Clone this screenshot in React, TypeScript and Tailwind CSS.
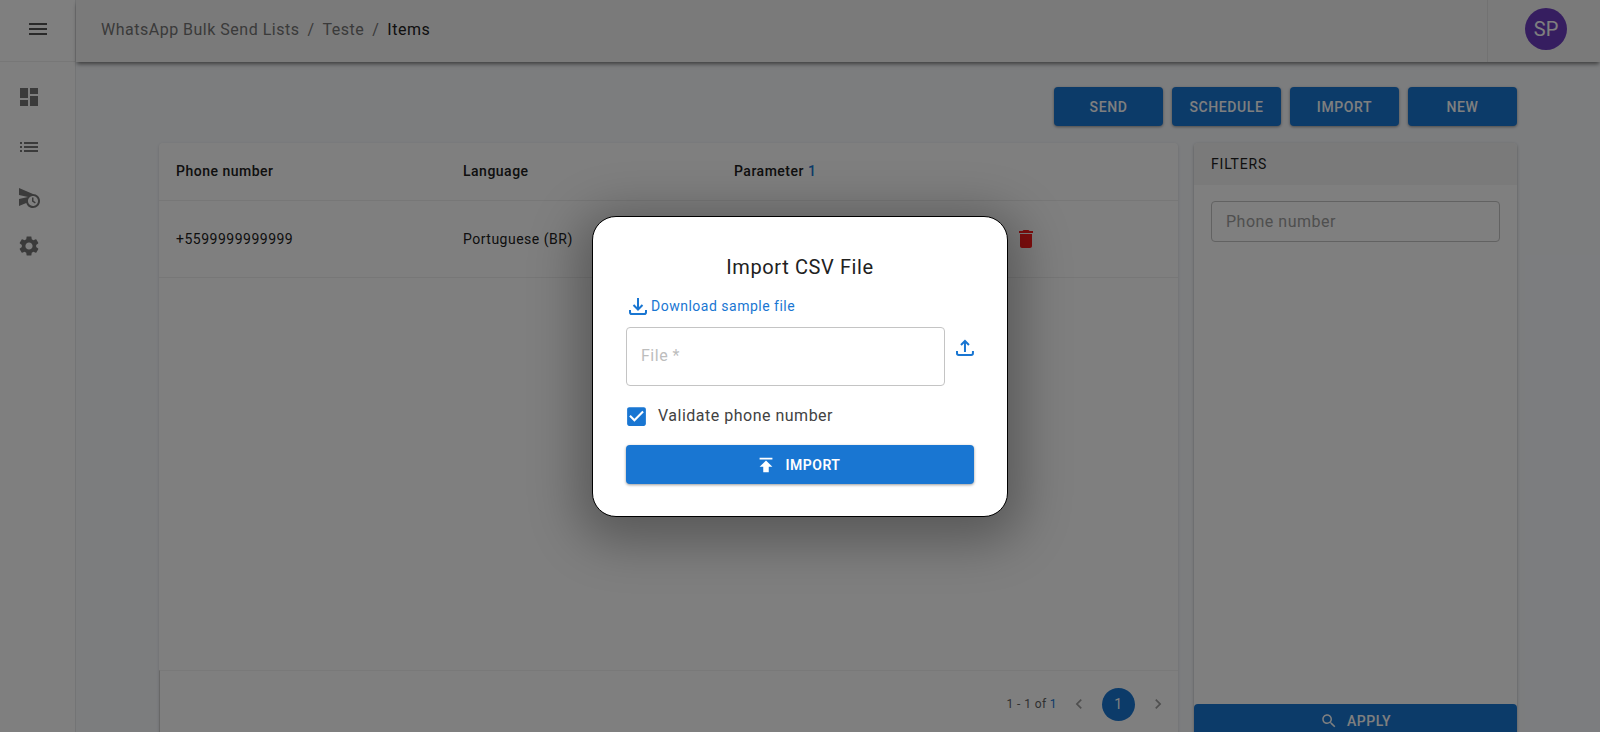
import React from 'react';

const paths = {
  menu: "M3 18h18v-2H3v2zm0-5h18v-2H3v2zm0-7v2h18V6H3z",
  dashboard: "M3 13h8V3H3v10zm0 8h8v-6H3v6zm10 0h8V11h-8v10zm0-18v6h8V3h-8z",
  list: "M3 13h2v-2H3v2zm0 4h2v-2H3v2zm0-8h2V7H3v2zm4 4h14v-2H7v2zm0 4h14v-2H7v2zM7 7v2h14V7H7z",
  scheduleSend: "M16.5 12.5H15v4l3 2 .75-1.23-2.25-1.52V12.5zM16 9 2 3v7l9 2-9 2v7l7.27-3.11C10.09 20.83 12.84 23 16 23c3.86 0 7-3.14 7-7s-3.14-7-7-7zm0 12c-2.75 0-4.98-2.22-5-4.97v-.07c.02-2.74 2.25-4.97 5-4.97 2.76 0 5 2.24 5 5S18.76 21 16 21z",
  settings: "M19.14 12.94c.04-.3.06-.61.06-.94 0-.32-.02-.64-.07-.94l2.03-1.58c.18-.14.23-.41.12-.61l-1.92-3.32c-.12-.22-.37-.29-.59-.22l-2.39.96c-.5-.38-1.03-.7-1.62-.94l-.36-2.54c-.04-.24-.24-.41-.48-.41h-3.84c-.24 0-.43.17-.47.41l-.36 2.54c-.59.24-1.13.57-1.62.94l-2.39-.96c-.22-.08-.47 0-.59.22L2.74 8.87c-.12.21-.08.47.12.61l2.03 1.58c-.05.3-.09.63-.09.94s.02.64.07.94l-2.03 1.58c-.18.14-.23.41-.12.61l1.92 3.32c.12.22.37.29.59.22l2.39-.96c.5.38 1.03.7 1.62.94l.36 2.54c.05.24.24.41.48.41h3.84c.24 0 .44-.17.47-.41l.36-2.54c.59-.24 1.13-.56 1.62-.94l2.39.96c.22.08.47 0 .59-.22l1.92-3.32c.12-.22.07-.47-.12-.61l-2.01-1.58zM12 15.6c-1.98 0-3.6-1.62-3.6-3.6s1.62-3.6 3.6-3.6 3.6 1.62 3.6 3.6-1.62 3.6-3.6 3.6z",
  trash: "M6 19c0 1.1.9 2 2 2h8c1.1 0 2-.9 2-2V7H6v12zM19 4h-3.5l-1-1h-5l-1 1H5v2h14V4z",
  publish: "M5 4v2h14V4H5zm0 10h4v6h6v-6h4l-7-7-7 7z",
  search: "M15.5 14h-.79l-.28-.27C15.41 12.59 16 11.11 16 9.5 16 5.91 13.09 3 9.5 3S3 5.91 3 9.5 5.91 16 9.5 16c1.61 0 3.09-.59 4.23-1.57l.27.28v.79l5 4.99L20.49 19l-4.99-5zm-6 0C7.01 14 5 11.99 5 9.5S7.01 5 9.5 5 14 7.01 14 9.5 11.99 14 9.5 14z",
  prev: "M15.41 7.41 14 6l-6 6 6 6 1.41-1.41L10.83 12z",
  next: "M10 6 8.59 7.41 13.17 12l-4.58 4.59L10 18l6-6z",
  checkbox: "M19 3H5c-1.11 0-2 .9-2 2v14c0 1.1.89 2 2 2h14c1.11 0 2-.9 2-2V5c0-1.1-.89-2-2-2zm-9 14l-5-5 1.41-1.41L10 14.17l7.59-7.59L19 8l-9 9z",
};

const Icon = ({ d, className }: { d: string; className: string }) => (
  <svg viewBox="0 0 24 24" fill="currentColor" className={className}>
    <path d={d} />
  </svg>
);

const actions = ["SEND", "SCHEDULE", "IMPORT", "NEW"];
const navIcons = [
  { d: paths.dashboard, cls: "mt-[23px]" },
  { d: paths.list, cls: "mt-[26px]" },
  { d: paths.scheduleSend, cls: "mt-[26px]" },
  { d: paths.settings, cls: "mt-[25px]" },
];

const Sidebar = () => (
  <aside className="w-[76px] shrink-0 bg-white border-r border-[#e6e8ea] flex flex-col">
    <div className="h-[62px] shrink-0 border-b border-[#eeeeee] flex items-center justify-center pb-[4px] text-[#555555]">
      <Icon d={paths.menu} className="w-6 h-6" />
    </div>
    <div className="flex flex-col pl-[17px] text-[#777777]">
      {navIcons.map((item, index) => (
        <div key={index} className={item.cls}>
          <Icon d={item.d} className="w-6 h-6" />
        </div>
      ))}
    </div>
  </aside>
);

const Header = () => (
  <header className="relative h-[62px] shrink-0 bg-[#f4f4f4] shadow-[0_3px_4px_-1px_rgba(0,0,0,0.5)] flex items-center">
    <div className="flex-1 pl-[25px] pb-[3px] flex items-center gap-[8px] text-base text-[#757575] tracking-[0.5px]">
      <span>WhatsApp Bulk Send Lists</span>
      <span>/</span>
      <span>Teste</span>
      <span>/</span>
      <span className="text-[#212121]">Items</span>
    </div>
    <div className="w-[113px] h-full border-l border-[#e4e4e4] flex items-center pl-[37px] pb-[4px]">
      <div className="w-[42px] h-[42px] rounded-full bg-[#6c3cc0] text-white text-xl flex items-center justify-center">SP</div>
    </div>
  </header>
);

const TableCard = () => (
  <div className="flex-1 bg-white rounded shadow-[0_1px_3px_rgba(0,0,0,0.15)] flex flex-col text-sm text-[#212121] tracking-[0.5px]">
    <div className="h-[58px] shrink-0 border-b border-[#eeeeee] flex items-center pb-[1px] font-medium">
      <span className="w-[304px] pl-[17px]">Phone number</span>
      <span className="w-[271px]">Language</span>
      <span>Parameter <span className="text-[#1976d2]">1</span></span>
    </div>
    <div className="h-[77px] shrink-0 border-b border-[#eeeeee] flex items-center">
      <span className="w-[304px] pl-[17px]">+5599999999999</span>
      <span className="w-[271px]">Portuguese (BR)</span>
      <span className="w-[280px]"></span>
      <Icon d={paths.trash} className="w-6 h-6 text-[#ff1c1c] -mr-6" />
    </div>
    <div className="flex-1"></div>
    <div className="h-[67px] shrink-0 border-t border-[#f2f2f2] border-l border-l-[#d0d0d0] flex items-center justify-end pr-[10px]">
      <span className="text-xs text-[#616161] mr-[12px] tracking-[0.4px]">1 - 1 of <span className="text-[#1976d2]">1</span></span>
      <Icon d={paths.prev} className="w-[20px] h-[20px] text-[#9e9e9e]" />
      <div className="w-[33px] h-[33px] rounded-full bg-[#1976d2] text-white text-sm flex items-center justify-center ml-[13px] mr-[13px]">1</div>
      <Icon d={paths.next} className="w-[20px] h-[20px] text-[#9e9e9e]" />
    </div>
  </div>
);

const FiltersCard = () => (
  <div className="w-[323px] shrink-0 bg-white rounded shadow-[0_1px_3px_rgba(0,0,0,0.3)] flex flex-col">
    <div className="h-[42px] shrink-0 bg-[#f5f5f5] rounded-t flex items-center pl-[17px] text-sm text-[#212121] tracking-[0.8px]">FILTERS</div>
    <div className="flex-1 px-[17px] pt-[16px]">
      <div className="h-[41px] border border-[#c4c4c4] rounded flex items-center pl-[14px] text-base text-[#9e9e9e] tracking-[0.5px]">Phone number</div>
    </div>
    <button className="h-[33px] shrink-0 bg-[#1976d2] rounded text-white text-sm font-medium tracking-[0.5px] flex items-center justify-center gap-[9px]">
      <Icon d={paths.search} className="w-[18px] h-[18px]" />
      <span>APPLY</span>
    </button>
  </div>
);

const ImportDialog = () => (
  <div className="absolute inset-0 bg-black/50 flex items-center justify-center pt-[1px]">
    <div className="w-[416px] h-[301px] bg-white rounded-[24px] border border-black shadow-[0_11px_50px_14px_rgba(0,0,0,0.3)] flex flex-col px-[33px] pt-[36px]">
      <h2 className="text-xl leading-7 text-center text-[#212121] tracking-[0.6px]">Import CSV File</h2>
      <div className="mt-[13px] h-6 flex items-center text-sm text-[#1976d2] pl-[3px] tracking-[0.5px]">
        <svg viewBox="0 0 18 18" fill="none" stroke="currentColor" strokeWidth="2" className="w-[18px] h-[18px] mr-[4px]">
          <path d="M9 1v11M4.5 8 9 12.5 13.5 8M1 13v2.2a1.8 1.8 0 0 0 1.8 1.8h12.4a1.8 1.8 0 0 0 1.8-1.8V13" />
        </svg>
        <span>Download sample file</span>
      </div>
      <div className="mt-[9px] flex">
        <div className="w-[320px] h-[59px] border border-[#c4c4c4] rounded pl-[14px] pb-[1px] flex items-center text-base text-[#bdbdbd] tracking-[0.5px]">File *</div>
        <svg viewBox="0 0 18 18" fill="none" stroke="currentColor" strokeWidth="2" className="w-[18px] h-[18px] ml-[11px] mt-[12px] text-[#1976d2]">
          <path d="M9 13V2M5 6l4-4 4 4M1 12v2.2A1.8 1.8 0 0 0 2.8 16h12.4a1.8 1.8 0 0 0 1.8-1.8V12" />
        </svg>
      </div>
      <div className="mt-[18px] h-6 flex items-center text-base text-[#424242] tracking-[0.5px]">
        <Icon d={paths.checkbox} className="w-[25px] h-[25px] text-[#1976d2] -ml-[2px] mr-[9px]" />
        <span>Validate phone number</span>
      </div>
      <button className="mt-[17px] h-[39px] pr-[5px] bg-[#1976d2] rounded text-white text-sm font-semibold tracking-[0.5px] shadow-[0_1px_3px_rgba(0,0,0,0.4)] flex items-center justify-center gap-[9px]">
        <Icon d={paths.publish} className="w-[22px] h-[22px]" />
        <span>IMPORT</span>
      </button>
    </div>
  </div>
);

export default function App() {
  return (
    <div className="relative h-screen overflow-hidden flex bg-[#f8fafd] font-['Roboto',sans-serif]">
      <Sidebar />
      <main className="flex-1 flex flex-col min-w-0">
        <Header />
        <div className="px-[83px] pt-[25px]">
          <div className="flex justify-end gap-[9px]">
            {actions.map((label) => (
              <button key={label} className="w-[109px] h-[39px] bg-[#1976d2] rounded text-white text-sm font-medium tracking-[0.6px] shadow-[0_1px_3px_rgba(0,0,0,0.4)]">{label}</button>
            ))}
          </div>
          <div className="mt-[17px] h-[594px] flex gap-[16px]">
            <TableCard />
            <FiltersCard />
          </div>
        </div>
      </main>
      <ImportDialog />
    </div>
  );
}
